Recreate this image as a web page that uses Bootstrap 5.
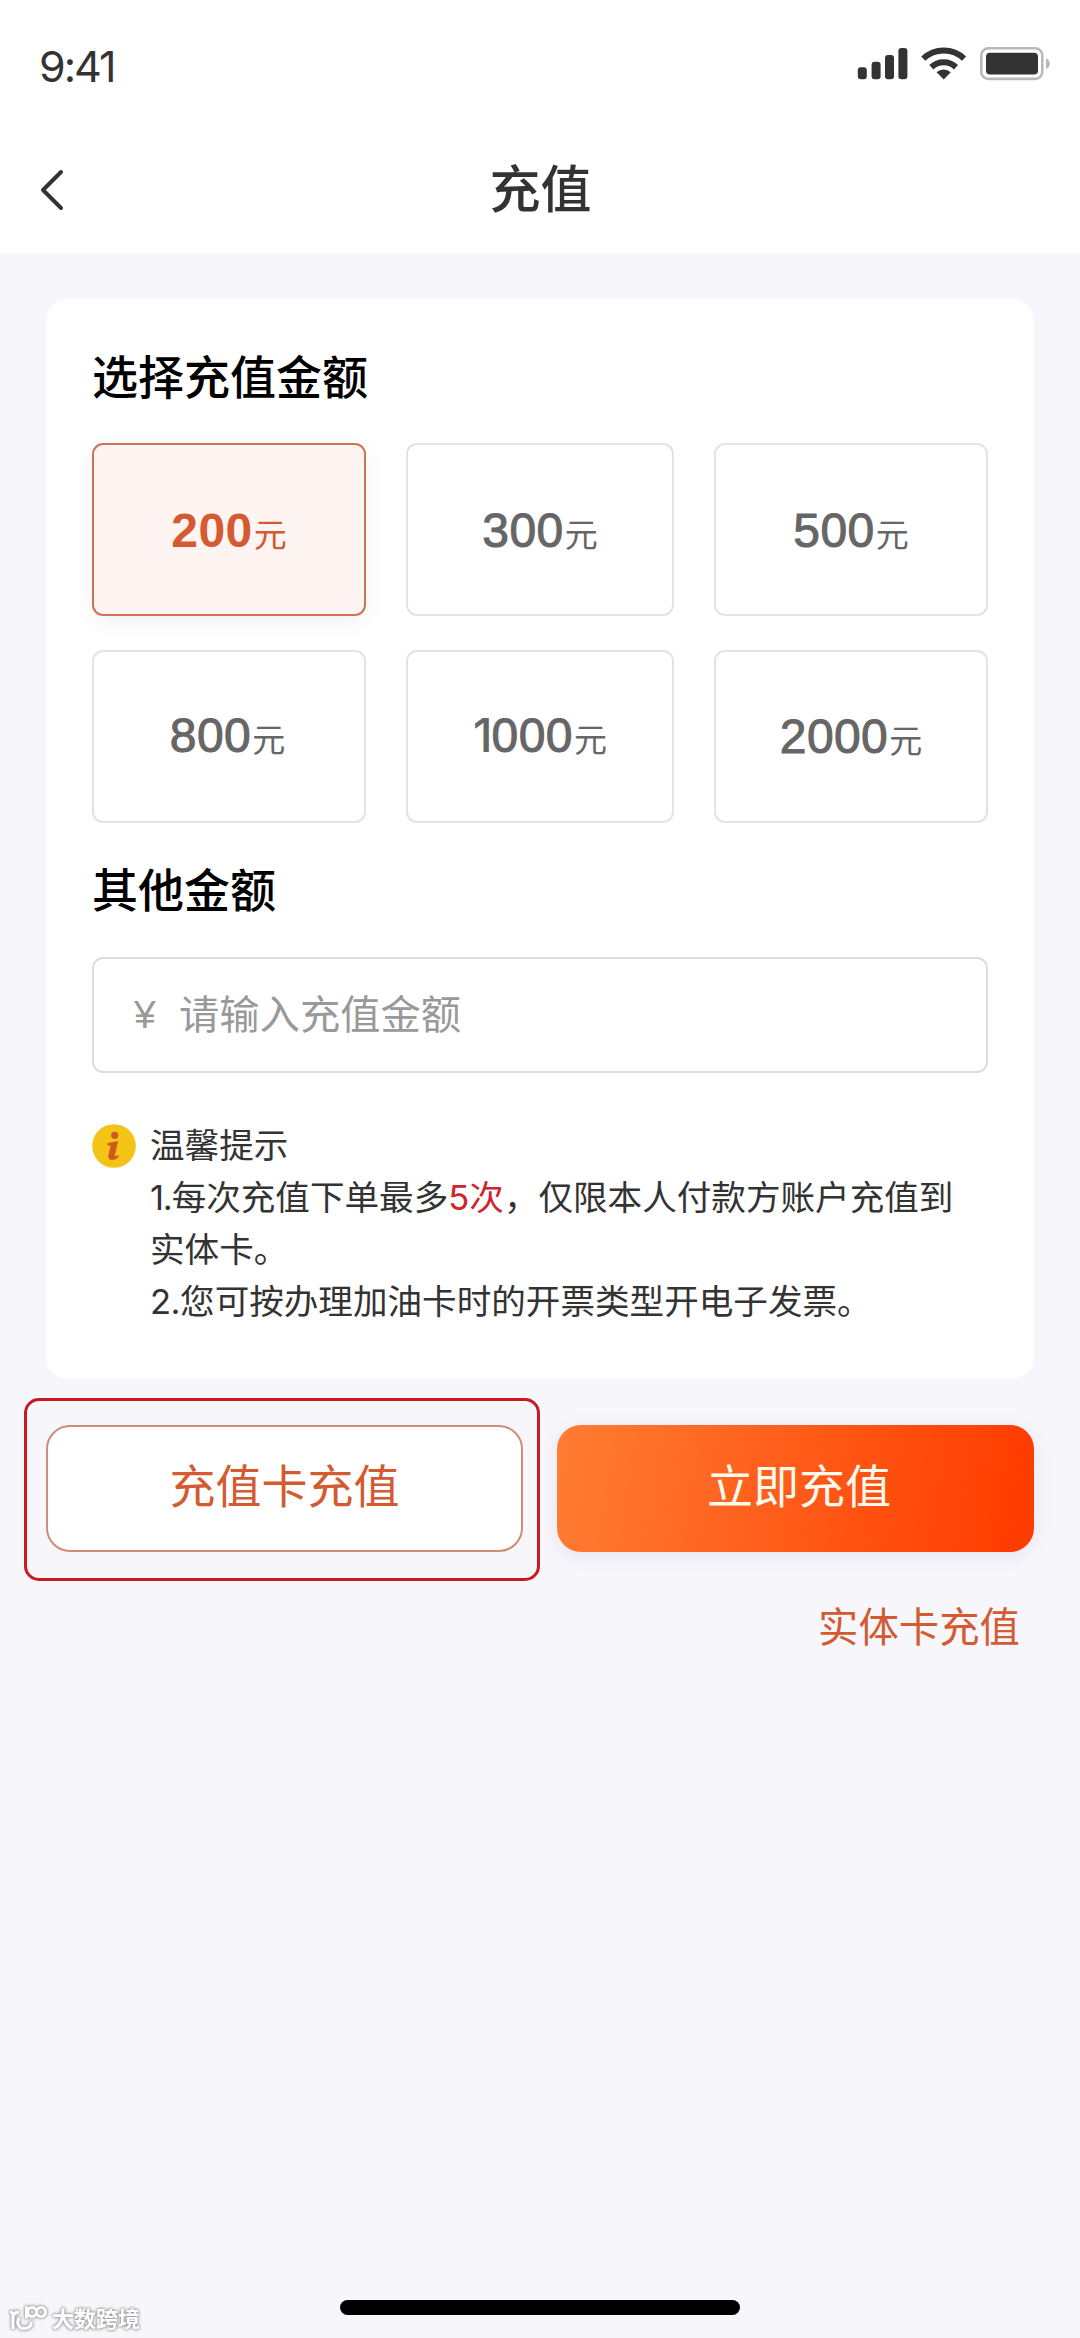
<!DOCTYPE html>
<html lang="zh-CN">
<head>
<meta charset="utf-8">
<meta name="viewport" content="width=device-width, initial-scale=1">
<title>充值</title>
<link href="https://cdn.jsdelivr.net/npm/bootstrap@5.3.0/dist/css/bootstrap.min.css" rel="stylesheet">
<script src="https://cdn.jsdelivr.net/npm/bootstrap@5.3.0/dist/js/bootstrap.bundle.min.js"></script>
<style>
  body { font-family: Inter, "Noto Sans CJK SC", sans-serif; background: #f6f6fb; color: #333; }
  .screen { width: 1080px; height: 2338px; overflow: hidden; }
  .top-area { height: 253px; }
  .status-row { height: 129px; padding: 0 30px 0 39px; }
  .status-icons { margin-top: 46px; }
  .clock { font-size: 43px; line-height: 132px; letter-spacing: -2px; }
  .title-row { height: 121px; padding-left: 39px; }
  .page-title { font-size: 51px; line-height: 121px; font-weight: 500; margin-left: -64px; }
  .panel { margin: 46px 46px 0; height: 1080px; padding: 48px 46px 0; border: 0; border-radius: 22px; }
  .section-title { font-size: 46px; line-height: 60px; font-weight: 500; color: #000; }
  .section-next { margin-top: 37px; }
  .amounts { display: grid; grid-template-columns: 274px 268px 274px; justify-content: space-between; row-gap: 34px; margin-top: 36px; }
  .amount { height: 173px; padding: 3px 0 0; border: 2px solid #e3e3e3; border-radius: 11px; color: #666; background: #fff; font-family: "Liberation Sans", "Noto Sans CJK SC", sans-serif; font-size: 48px; line-height: 1; }
  .amount:nth-child(4), .amount:nth-child(5) { padding: 0 0 2px; }
  .amount:nth-child(6) { padding: 0; }
  .amount:nth-child(4) { padding-right: 3px; }
  .amount b { font-weight: 400; letter-spacing: .4px; -webkit-text-stroke: 1px currentColor; }
  .amount .one { font-family: Inter, sans-serif; font-size: 47px; font-weight: 500; line-height: 0; letter-spacing: -1px; -webkit-text-stroke: 0; }
  .amount small { font-size: 33px; margin-left: 1px; }
  .amount.active { background: #fef4f1; border-color: #cf7355; color: #d35a31; box-shadow: 0 6px 22px rgba(0,0,0,.06); }
  .amount.active b { font-weight: 700; -webkit-text-stroke: 0; }
  .money-input { height: 116px; border: 2px solid #dcdce2; border-radius: 11px; margin-top: 37px; padding-left: 40px; color: #999; font-size: 40.3px; }
  .yen { font-family: "Liberation Sans", sans-serif; font-size: 39px; width: 45px; }
  .tips { margin-top: 46px; font-size: 34.6px; line-height: 52px; }
  .tip-icon { margin: 5px 14px 0 0; }
  .latin { letter-spacing: -.5px; }
  .latin-one { letter-spacing: -1.2px; }
  .count { color: #d0232c; }
  .actions { margin-top: 19px; padding: 0 46px 0 24px; }
  .frame { width: 516px; height: 183px; border: 3px solid #cb1920; border-radius: 15px; padding: 24px 14px 0 19px; }
  .act { height: 127px; border-radius: 24px; font-size: 46px; line-height: 1; padding: 0 0 5px; }
  .act-card { background: #fff; border: 2px solid #cd8e75; color: #d35a31; }
  .act-now { width: 477px; margin-top: 27px; border: 0; padding-left: 7px; color: #fff9ee; background: linear-gradient(100deg, #ff7d33, #ff3c00 96%); box-shadow: 0 4px 20px rgba(40,40,80,.08); }
  .entity { font-size: 40.4px; line-height: 60px; color: #d35a31; margin: 17px 60px 0 0; }
  .home-bar { width: 400px; height: 15px; border-radius: 8px; left: 340px; top: 2300px; }
  .stamp { left: 7px; top: 2304px; color: #fff; gap: 5px; filter: drop-shadow(0 0 1.5px #999) drop-shadow(0 0 1px #aaa); }
  .stamp span { font-size: 22px; line-height: 30px; font-weight: 700; }
</style>
</head>
<body>
<div class="screen position-relative">
  <header class="top-area bg-white">
    <div class="status-row d-flex justify-content-between">
      <div class="clock">9:41</div>
      <svg class="status-icons" width="194" height="36" viewBox="856 46 194 36">
        <g fill="#333">
          <rect x="857.8" y="67.3" width="9" height="12" rx="3"/><rect x="871.6" y="61.7" width="9" height="17.6" rx="3"/>
          <rect x="885" y="55" width="9" height="24.3" rx="3"/><rect x="898.4" y="48" width="9" height="31.3" rx="3"/>
          <rect x="986" y="52.8" width="52" height="21.6" rx="4"/>
          <path d="M943.7 79.5l-7.1-7.3a10.5 10.5 0 0 1 14.2 0z"/>
        </g>
        <path d="M931.4 67.2a18 18 0 0 1 24.6 0M923.3 58.6a29.5 29.5 0 0 1 40.8 0" fill="none" stroke="#333" stroke-width="6"/>
        <rect x="981.3" y="48.3" width="61" height="30.6" rx="7" fill="none" stroke="#b9b9b9" stroke-width="2.6"/>
        <path d="M1046 58.5c5 1.5 5 9 0 10.5z" fill="#b9b9b9"/>
      </svg>
    </div>
    <div class="title-row d-flex align-items-center">
      <svg width="26" height="44" viewBox="0 0 26 44" fill="none" stroke="#333" stroke-width="4" stroke-linecap="round" stroke-linejoin="round"><path d="M22 4L4 22 22 40"/></svg>
      <div class="page-title flex-grow-1 text-center">充值</div>
    </div>
  </header>

  <main>
    <section class="panel card">
      <div class="section-title">选择充值金额</div>
      <div class="amounts">
        <button class="btn amount active"><b>200</b><small>元</small></button>
        <button class="btn amount"><b>300</b><small>元</small></button>
        <button class="btn amount"><b>500</b><small>元</small></button>
        <button class="btn amount"><b>800</b><small>元</small></button>
        <button class="btn amount"><b><span class="one">1</span>000</b><small>元</small></button>
        <button class="btn amount"><b>2000</b><small>元</small></button>
      </div>
      <div class="section-title section-next">其他金额</div>
      <div class="money-input d-flex align-items-center"><span class="yen">¥</span><span>请输入充值金额</span></div>
      <div class="tips d-flex align-items-start">
        <svg class="tip-icon flex-shrink-0" width="44" height="44" viewBox="0 0 44 44"><circle cx="22" cy="22" r="21.8" fill="#f3c316"/><circle cx="22.700" cy="11.300" r="3.600" fill="#cf5a20"/><path d="M15.800 19.400C19 19 22 18 25.600 17.600L22.700 30.500C22.300 32.500 23.500 32.800 26.800 31.800C25.500 35 21 36.200 18.400 35.300C16.300 34.600 16.600 32.500 17 30.500L18.800 22.500C19.100 21.200 18 20.800 15.800 21Z" fill="#cf5a20" stroke="#cf5a20" stroke-width=".8" stroke-linejoin="round"/></svg>
        <div class="text-nowrap">温馨提示<br><span class="latin-one">1.</span>每次充值下单最多<span class="count">5次</span>，仅限本人付款方账户充值到<br>实体卡。<br><span class="latin">2.</span>您可按办理加油卡时的开票类型开电子发票。</div>
      </div>
    </section>
    <div class="actions d-flex justify-content-between align-items-start">
      <div class="frame"><button class="btn act act-card w-100">充值卡充值</button></div>
      <button class="btn act act-now">立即充值</button>
    </div>
    <div class="entity text-end">实体卡充值</div>
  </main>

  <div class="home-bar bg-black position-absolute"></div>
  <div class="stamp position-absolute d-flex align-items-center">
    <svg width="40" height="28" viewBox="0 0 40 28" fill="none" stroke="#fff" stroke-width="3"><path d="M6 24V7M3 7.500h3M6 11c1-3 3-4 6-3.500M12 13c-3 5 0 10.500 5 10.500 4 0 7-2 7.500-6.500M19.500 1.500v12"/><circle cx="25" cy="7" r="4.500"/><circle cx="34" cy="7" r="4.500"/></svg>
    <span>大数跨境</span>
  </div>
</div>
</body>
</html>
